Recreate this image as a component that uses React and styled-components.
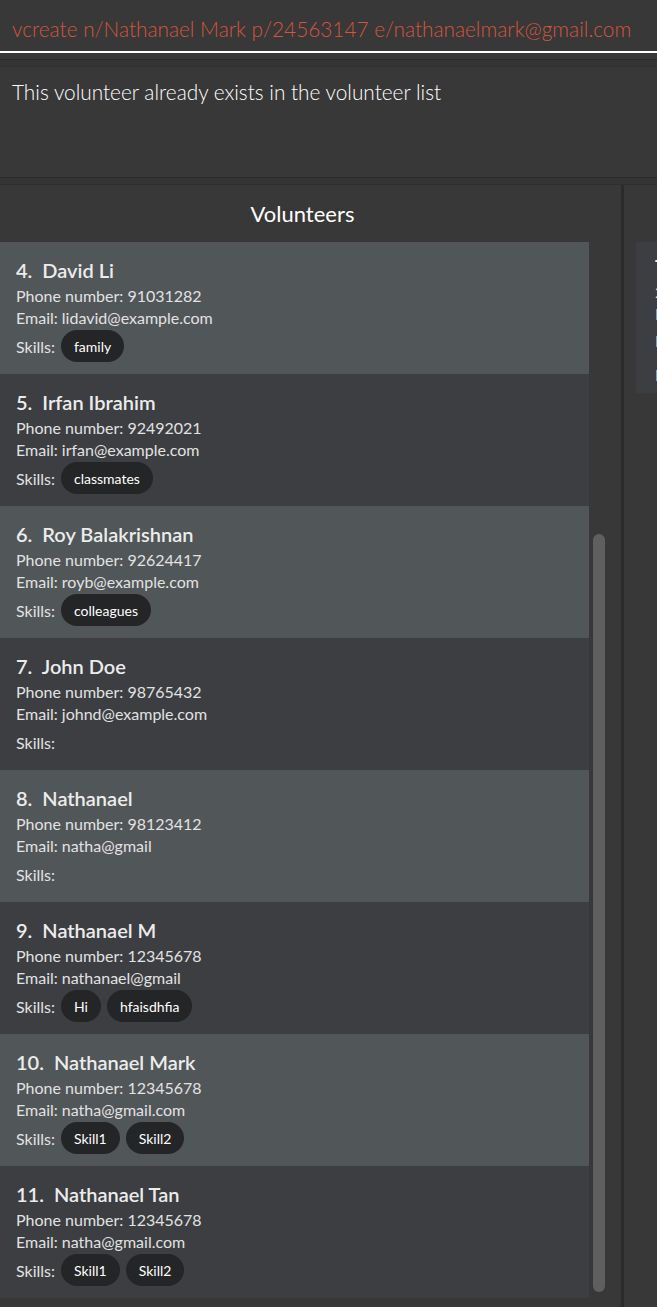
import React from "react"
import styled, { createGlobalStyle } from "styled-components"

const volunteers = [
  { id: 4, name: "David Li", phone: "91031282", email: "lidavid@example.com", skills: ["family"] },
  { id: 5, name: "Irfan Ibrahim", phone: "92492021", email: "irfan@example.com", skills: ["classmates"] },
  { id: 6, name: "Roy Balakrishnan", phone: "92624417", email: "royb@example.com", skills: ["colleagues"] },
  { id: 7, name: "John Doe", phone: "98765432", email: "johnd@example.com", skills: [] },
  { id: 8, name: "Nathanael", phone: "98123412", email: "natha@gmail", skills: [] },
  { id: 9, name: "Nathanael M", phone: "12345678", email: "nathanael@gmail", skills: ["Hi", "hfaisdhfia"] },
  { id: 10, name: "Nathanael Mark", phone: "12345678", email: "natha@gmail.com", skills: ["Skill1", "Skill2"] },
  { id: 11, name: "Nathanael Tan", phone: "12345678", email: "natha@gmail.com", skills: ["Skill1", "Skill2"] },
]

const App = () => (
  <>
    <GlobalStyle />
    <Window>
      <CommandBox>vcreate n/Nathanael Mark p/24563147 e/nathanaelmark@gmail.com</CommandBox>
      <Splitter $gap={6} />
      <ResultBox>This volunteer already exists in the volunteer list</ResultBox>
      <Splitter $gap={0} />
      <Main>
        <VolunteerPanel>
          <PanelTitle>Volunteers</PanelTitle>
          <ListRow>
            <List>
              {volunteers.map((v, i) => (
                <Card key={v.id} $light={i % 2 === 0}>
                  <Name>{v.id}.&nbsp;&nbsp;{v.name}</Name>
                  <Field>Phone number: {v.phone}</Field>
                  <Field>Email: {v.email}</Field>
                  <Skills>
                    <span>Skills:</span>
                    {v.skills.map((s) => (
                      <Chip key={s}>{s}</Chip>
                    ))}
                  </Skills>
                </Card>
              ))}
            </List>
            <Track>
              <Thumb />
            </Track>
          </ListRow>
        </VolunteerPanel>
        <Divider />
        <EventPanel>
          <EventCard>
            <Name>Tutoring Session</Name>
            <Field>2024-03-12 10:00</Field>
            <Field>Location: Library</Field>
            <Field $gap={5}>Description: reading</Field>
            <Field $gap={12}>Materials: books</Field>
          </EventCard>
        </EventPanel>
      </Main>
    </Window>
  </>
)

export default App

const GlobalStyle = createGlobalStyle`
  html, body {
    margin: 0;
    padding: 0;
    background: #383838;
  }
  body {
    font-family: "Lato", "Open Sans", sans-serif;
    overflow: hidden;
  }
`

const Window = styled.div`
  width: 657px;
  height: 1307px;
  display: flex;
  flex-direction: column;
  background: #383838;
  overflow: hidden;
`

const CommandBox = styled.div`
  height: 53px;
  padding: 5px 12px 0;
  display: flex;
  align-items: center;
  box-sizing: border-box;
  font-size: 20.8px;
  font-weight: 300;
  color: #d4553d;
  border-bottom: 2px solid #ffffff;
  white-space: nowrap;
`

const Splitter = styled.div`
  height: 6px;
  margin-top: ${(p) => p.$gap}px;
  background: #343434;
  border-top: 1px solid #2b2b2b;
  border-bottom: 1px solid #2f2f2f;
`

const ResultBox = styled.div`
  height: 110px;
  padding: 12px 12px;
  box-sizing: border-box;
  font-size: 20.8px;
  line-height: 25px;
  font-weight: 300;
  color: #ffffff;
`

const Main = styled.div`
  flex: 1;
  display: flex;
  min-height: 0;
`

const VolunteerPanel = styled.div`
  flex: 0 0 621px;
  display: flex;
  flex-direction: column;
`

const PanelTitle = styled.div`
  height: 57px;
  padding-right: 16px;
  display: flex;
  align-items: center;
  justify-content: center;
  font-size: 22px;
  font-weight: 400;
  color: #ffffff;
`

const ListRow = styled.div`
  display: flex;
`

const List = styled.div`
  flex: 0 0 589px;
  display: flex;
  flex-direction: column;
`

const Card = styled.div`
  height: 132px;
  box-sizing: border-box;
  padding: 16px 16px 12px;
  display: flex;
  flex-direction: column;
  background: ${(p) => (p.$light ? "#515658" : "#3c3e41")};
  color: #e2e2e2;
`

const Name = styled.div`
  height: 24px;
  line-height: 24px;
  font-size: 20px;
  font-weight: 600;
  color: #ececec;
  margin-bottom: 3px;
  white-space: nowrap;
`

const Field = styled.div`
  height: 22px;
  line-height: 22px;
  margin-top: ${(p) => p.$gap || 0}px;
  font-size: 16px;
  white-space: nowrap;
`

const Skills = styled.div`
  height: 32px;
  margin-top: 1px;
  display: flex;
  align-items: center;
  gap: 6px;
  font-size: 16px;
`

const Chip = styled.span`
  height: 32px;
  padding: 0 13px;
  display: inline-flex;
  align-items: center;
  border-radius: 16px;
  background: #242526;
  color: #ffffff;
  font-size: 14px;
`

const Track = styled.div`
  flex: 1;
  padding: 292px 16px 0 4px;
`

const Thumb = styled.div`
  width: 12px;
  height: 758px;
  border-radius: 6px;
  background: #5f5f5f;
`

const Divider = styled.div`
  flex: 0 0 3px;
  background: #2b2b2b;
`

const EventPanel = styled.div`
  flex: 1;
  overflow: hidden;
  padding: 57px 0 0 12px;
`

const EventCard = styled.div`
  width: 400px;
  height: 151px;
  box-sizing: border-box;
  padding: 12px 19px;
  background: #3c3e41;
  color: #e2e2e2;
`
